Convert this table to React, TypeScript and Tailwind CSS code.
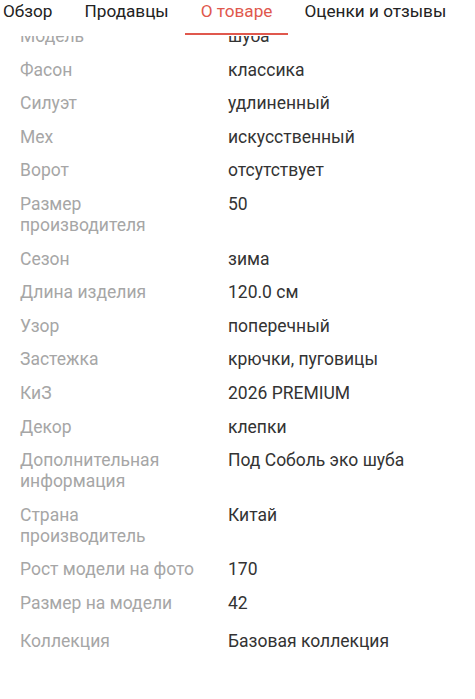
import React from "react";

const rows: [string, string][] = [
  ["Модель", "шуба"],
  ["Фасон", "классика"],
  ["Силуэт", "удлиненный"],
  ["Мех", "искусственный"],
  ["Ворот", "отсутствует"],
  ["Размер производителя", "50"],
  ["Сезон", "зима"],
  ["Длина изделия", "120.0 см"],
  ["Узор", "поперечный"],
  ["Застежка", "крючки, пуговицы"],
  ["КиЗ", "2026 PREMIUM"],
  ["Декор", "клепки"],
  ["Дополнительная информация", "Под Соболь эко шуба"],
  ["Страна производитель", "Китай"],
  ["Рост модели на фото", "170"],
  ["Размер на модели", "42"],
];

export default function App() {
  return (
    <div
      className="relative w-[475px] h-[699px] overflow-hidden bg-white"
      style={{ fontFamily: "Roboto, 'Noto Sans', sans-serif" }}
    >
      <div className="pt-[19.8px]">
        {rows.map(([k, v]) => (
          <div key={k} className="flex py-[6.3px] text-[17.5px] leading-[21px]">
            <div className="w-[228px] shrink-0 pl-[20px] pr-[28px] text-[#a6a6a6]">{k}</div>
            <div className="flex-1 text-[#333333]">{v}</div>
          </div>
        ))}
        <div className="flex py-[6.3px] mt-[4px] text-[17.5px] leading-[21px]">
          <div className="w-[228px] shrink-0 pl-[20px] pr-[28px] text-[#a6a6a6]">Коллекция</div>
          <div className="flex-1 text-[#333333]">Базовая коллекция</div>
        </div>
      </div>

      <div className="absolute left-0 top-0 w-full h-[36px] bg-white">
        <div className="flex items-start ml-[-13px] text-[17.2px] leading-[21px] text-[#222222] whitespace-nowrap">
          <div className="px-[16px] pt-[1px] h-[36px]">Обзор</div>
          <div className="px-[16px] pt-[1px] h-[36px]">Продавцы</div>
          <div className="relative px-[16px] pt-[1px] h-[36px] text-[#e0584d]">
            О товаре
            <div className="absolute left-0 right-0 top-[33px] h-[2px] bg-[#e0584d]" />
          </div>
          <div className="px-[16px] pt-[1px] h-[36px]">Оценки и отзывы</div>
        </div>
      </div>
    </div>
  );
}
